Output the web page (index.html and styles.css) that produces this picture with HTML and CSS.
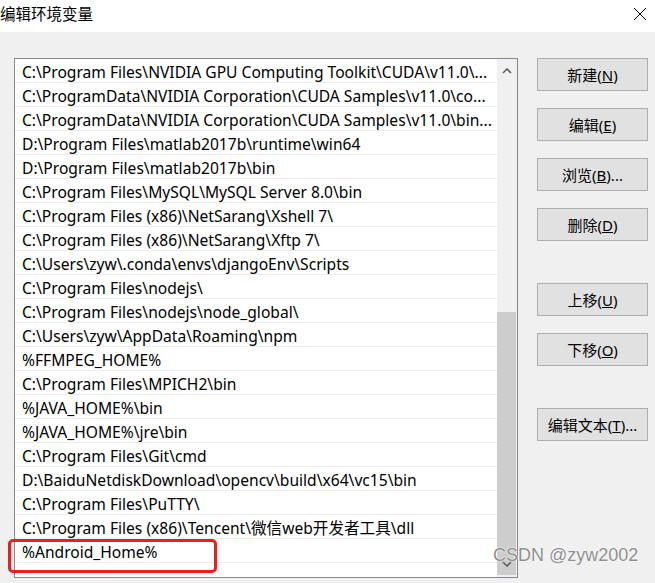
FILE: index.html
```html
<!DOCTYPE html>
<html lang="zh-CN">
<head>
<meta charset="utf-8">
<title>编辑环境变量</title>
<link rel="stylesheet" href="styles.css">
</head>
<body>
<div class="window">
  <header class="titlebar">
    <span class="title">编辑环境变量</span>
    <svg class="close" width="14" height="14" viewBox="0 0 14 14"><path d="M1 1L13 13M13 1L1 13" stroke="#000" stroke-width="1" fill="none"/></svg>
  </header>
  <main class="content">
    <div class="listbox">
      <ul class="rows">
        <li>C:\Program Files\NVIDIA GPU Computing Toolkit\CUDA\v11.0\...</li>
        <li>C:\ProgramData\NVIDIA Corporation\CUDA Samples\v11.0\co...</li>
        <li>C:\ProgramData\NVIDIA Corporation\CUDA Samples\v11.0\bin...</li>
        <li>D:\Program Files\matlab2017b\runtime\win64</li>
        <li>D:\Program Files\matlab2017b\bin</li>
        <li>C:\Program Files\MySQL\MySQL Server 8.0\bin</li>
        <li>C:\Program Files (x86)\NetSarang\Xshell 7\</li>
        <li>C:\Program Files (x86)\NetSarang\Xftp 7\</li>
        <li>C:\Users\zyw\.conda\envs\djangoEnv\Scripts</li>
        <li>C:\Program Files\nodejs\</li>
        <li>C:\Program Files\nodejs\node_global\</li>
        <li>C:\Users\zyw\AppData\Roaming\npm</li>
        <li>%FFMPEG_HOME%</li>
        <li>C:\Program Files\MPICH2\bin</li>
        <li>%JAVA_HOME%\bin</li>
        <li>%JAVA_HOME%\jre\bin</li>
        <li>C:\Program Files\Git\cmd</li>
        <li>D:\BaiduNetdiskDownload\opencv\build\x64\vc15\bin</li>
        <li>C:\Program Files\PuTTY\</li>
        <li>C:\Program Files (x86)\Tencent\微信web开发者工具\dll</li>
        <li>%Android_Home%</li>
        <li></li>
      </ul>
      <div class="scrollbar">
        <div class="arrow up"><svg width="10" height="6" viewBox="0 0 10 6"><path d="M1 5L5 1L9 5" stroke="#606060" stroke-width="1.6" fill="none"/></svg></div>
        <div class="track"></div>
        <div class="thumb"><svg class="down" width="10" height="6" viewBox="0 0 10 6"><path d="M1 1L5 5L9 1" stroke="#606060" stroke-width="1.6" fill="none"/></svg></div>
      </div>
    </div>
    <div class="buttons">
      <button class="btn">新建(<u>N</u>)</button>
      <button class="btn">编辑(<u>E</u>)</button>
      <button class="btn">浏览(<u>B</u>)...</button>
      <button class="btn">删除(<u>D</u>)</button>
      <button class="btn gap">上移(<u>U</u>)</button>
      <button class="btn">下移(<u>O</u>)</button>
      <button class="btn gap">编辑文本(<u>T</u>)...</button>
    </div>
  </main>
  <div class="highlight"></div>
  <div class="watermark">CSDN @zyw2002</div>
</div>
</body>
</html>
```
FILE: styles.css
```css
* { box-sizing: border-box; }
html, body { margin: 0; padding: 0; }
body {
  width: 655px;
  height: 583px;
  overflow: hidden;
  background: #f0f0f0;
  font-family: "Noto Sans", "Noto Sans CJK SC", sans-serif;
  font-size: 15px;
  color: #000;
}
.window { position: relative; width: 655px; height: 583px; }
.titlebar {
  height: 32px;
  background: #fff;
  display: flex;
  align-items: center;
  justify-content: space-between;
  padding: 0 8px 4px 0;
}
.title { font-size: 15.5px; line-height: 20px; }
.content {
  display: flex;
  align-items: flex-start;
  padding: 26px 0 0 14px;
}
.listbox {
  width: 504px;
  height: 520px;
  border: 1px solid #828790;
  background: #fff;
  display: flex;
  overflow: hidden;
}
.rows {
  list-style: none;
  margin: 0;
  padding: 0;
  flex: 1;
  font-size: 15.6px;
}
.rows li {
  height: 24px;
  line-height: 23px;
  padding: 2px 0 0 7px;
  border-bottom: 1px solid #ececec;
  white-space: nowrap;
  overflow: hidden;
  letter-spacing: 0;
}
.scrollbar {
  width: 20px;
  background: #f0f0f0;
  display: flex;
  flex-direction: column;
}
.arrow {
  height: 24px;
  display: flex;
  justify-content: center;
  align-items: center;
  padding-right: 1px;
}
.track { height: 229px; }
.thumb {
  flex: 1;
  margin: 0 1px 2px 0;
  background: #cdcdcd;
  display: flex;
  align-items: flex-end;
  justify-content: center;
  padding-bottom: 8px;
}
.buttons {
  margin-left: 19px;
  display: flex;
  flex-direction: column;
  gap: 17px;
}
.btn {
  width: 111px;
  height: 33px;
  background: #e1e1e1;
  border: 1px solid #adadad;
  font-family: "Noto Sans", "Noto Sans CJK SC", sans-serif;
  font-size: 15px;
  color: #000;
  padding: 0;
}
.btn.gap { margin-top: 25px; }
.highlight {
  position: absolute;
  left: 8px;
  top: 539px;
  width: 209px;
  height: 34px;
  border: 3px solid #f21c1c;
  border-radius: 5px;
}
.watermark {
  position: absolute;
  left: 493px;
  top: 545px;
  font-family: "Liberation Sans", sans-serif;
  font-size: 18px;
  color: #8f8f8f;
  text-shadow: 0 0 2px #fff, 0 0 1px #fff;
}
```
